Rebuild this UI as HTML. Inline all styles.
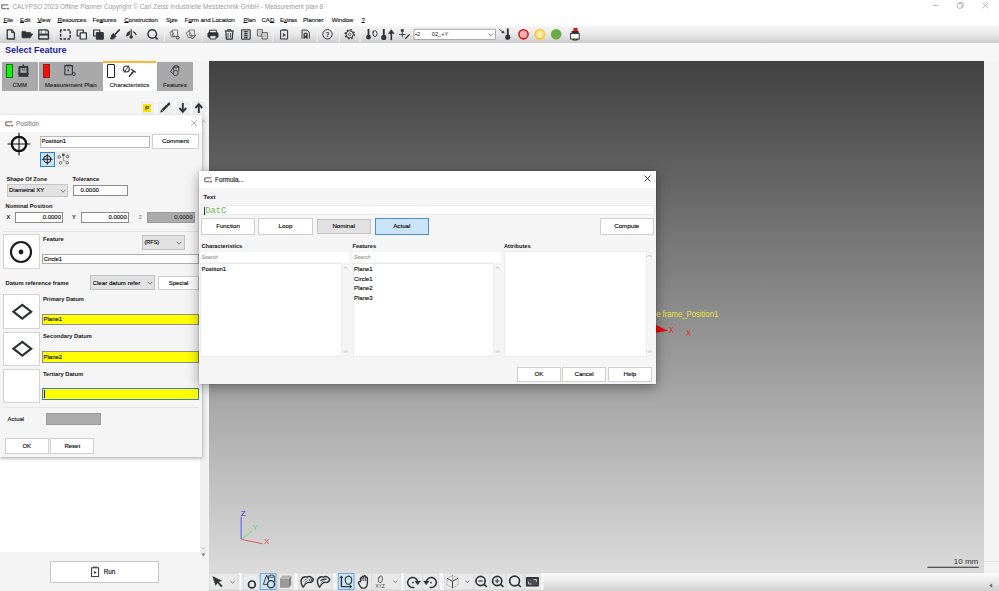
<!DOCTYPE html>
<html><head><meta charset="utf-8"><title>CALYPSO</title>
<style>
*{box-sizing:border-box;margin:0;padding:0}
html,body{width:999px;height:591px;overflow:hidden;background:#fff}
body{font-family:"Liberation Sans",sans-serif;font-size:6.5px;color:#000;position:relative}
.abs{position:absolute}
.t{position:absolute;white-space:nowrap;line-height:1;-webkit-text-stroke:0.12px currentColor}
.btn{position:absolute;background:#fff;border:1px solid #d0d0d0;text-align:center;white-space:nowrap}
.inp{position:absolute;background:#fff;border:1px solid #9a9a9a;white-space:nowrap}
.b{font-weight:bold;-webkit-text-stroke:0 !important}
.mi{top:16.7px;font-size:6.2px;letter-spacing:-0.1px;color:#111;text-align:center}
.mi u{text-decoration-thickness:0.45px;text-underline-offset:0.4px}
</style></head><body>
<!-- title bar -->
<div id="titlebar" class="abs" style="left:0;top:0;width:999px;height:13px;background:#fff"></div>
<div class="t" style="left:12.4px;top:4.2px;font-size:6.42px;color:#9c9c9c;-webkit-text-stroke:0">CALYPSO 2023 Offline Planner Copyright © Carl Zeiss Industrielle Messtechnik GmbH - Measurement plan 8</div>
<!-- menubar -->
<div id="menubar" class="abs" style="left:0;top:13px;width:999px;height:13px;background:#fff"></div>
<svg class="abs" style="left:1.4px;top:3.6px" width="9" height="6" viewBox="0 0 9 6"><path d="M7.4 0.8H2Q0.7 0.8 0.7 2V3.4Q0.7 4.6 2 4.6H5.4" fill="none" stroke="#7c7c7c" stroke-width="1.3"/><rect x="6.2" y="3.8" width="1.6" height="1.6" fill="#e02020"/></svg>
<svg class="abs" style="left:925px;top:0" width="74" height="13" viewBox="0 0 74 13"><g fill="none" stroke="#9a9a9a" stroke-width="0.7"><path d="M8 5.4H13.2"/><rect x="32.4" y="3.6" width="4.6" height="4.6" rx="0.9"/><path d="M33.6 3.6V3.2Q33.6 2.6 34.2 2.6H37.4Q38.2 2.6 38.2 3.4V6.4Q38.2 7.2 37.4 7.2H37"/><path d="M57.4 2.6L63.2 8.4M63.2 2.6L57.4 8.4"/></g></svg>
<div class="t mi" style="left:3.5px;width:9.0px"><u>F</u>ile</div>
<div class="t mi" style="left:20px;width:10.5px"><u>E</u>dit</div>
<div class="t mi" style="left:37px;width:13.75px"><u>V</u>iew</div>
<div class="t mi" style="left:57.5px;width:28.25px"><u>R</u>esources</div>
<div class="t mi" style="left:92.5px;width:23.5px">Fe<u>a</u>tures</div>
<div class="t mi" style="left:123px;width:36px"><u>C</u>onstruction</div>
<div class="t mi" style="left:166px;width:11px">S<u>i</u>ze</div>
<div class="t mi" style="left:183.75px;width:52.0px">F<u>o</u>rm and Location</div>
<div class="t mi" style="left:242px;width:15px"><u>P</u>lan</div>
<div class="t mi" style="left:261.5px;width:12.25px">CA<u>D</u></div>
<div class="t mi" style="left:280px;width:16px">E<u>x</u>tras</div>
<div class="t mi" style="left:302.5px;width:21.5px">Planner</div>
<div class="t mi" style="left:330.5px;width:24.0px">Window</div>
<div class="t mi" style="left:361.5px;width:3.0px"><u>?</u></div>
<!-- toolbar -->
<div id="toolbar" class="abs" style="left:0;top:25px;width:999px;height:18px;background:linear-gradient(#fff 0,#f3f3f3 10%,#ebebeb 45%,#cdcdcd 100%)"></div>
<svg id="tbicons" class="abs" style="left:0;top:24px" width="999" height="22" viewBox="0 24 999 22">
<g fill="none" stroke="#2f3338" stroke-width="1.3" stroke-linejoin="round">
<!-- new -->
<path d="M7.2 29.8H11.6L14.4 32.6V39H7.2Z"/><path d="M11.6 29.8V32.6H14.4" stroke-width="0.9"/>
<!-- open folder -->
<path d="M22 37.6V31.4H25.6L26.6 32.6H30.6V33.6" fill="#2f3338" stroke-width="0.8"/><path d="M22.3 37.8L24.6 33.9H32.6L30.2 37.8Z" fill="#2f3338" stroke-width="0.8"/>
<!-- save -->
<path d="M38.8 29.9H47L48.4 31.3V39H38.8Z" stroke-width="1.4"/><path d="M39 34.6H48.2" stroke-width="2"/><path d="M41.2 30V33.6M45.8 30V33.6" stroke-width="0.6"/>
<!-- dashed rect -->
<rect x="60.6" y="30" width="9.6" height="9" stroke-width="1.5" stroke-dasharray="2.6 1.4" stroke-dashoffset="1.3"/>
<!-- copy -->
<rect x="77.2" y="30" width="6.2" height="6" stroke-width="1.2"/><rect x="80.2" y="32.8" width="6.2" height="6.2" fill="#f0f0f0" stroke-width="1.2"/>
<!-- paste -->
<rect x="93.6" y="30" width="6.2" height="6" stroke-width="1.2"/><rect x="96.3" y="32.6" width="7" height="6.6" fill="#2f3338" stroke-width="1"/>
<!-- brush -->
<path d="M119.2 30L115.4 34" stroke-width="1.8" stroke-linecap="round"/><path d="M113.2 33.2L116.3 36.3L113.4 38.9Q111 39.6 110 38.4Q111.4 38 111.2 35.6Z" fill="#2f3338" stroke-width="0.5"/>
<!-- probe -->
<path d="M131.2 29.2V36" stroke-width="1.3"/><circle cx="131.2" cy="37" r="1.7" fill="#2f3338" stroke="none"/><path d="M129.6 31.4Q127 32.6 126.6 35.8L129 34.8ZM132.8 31.4Q135.4 32.4 136.2 35" stroke-width="1.1" fill="#2f3338"/>
<!-- search -->
<circle cx="152.2" cy="34" r="4.3" stroke-width="1.5"/><path d="M155.3 37.1L157.6 39.4" stroke-width="1.6"/>
</g>
<!-- feature icons -->
<g fill="none" stroke="#555" stroke-width="0.7">
<path d="M172 30H177.6V36.4H172.6Z"/><path d="M170 32.2L172.4 31.2L174.6 36.6L171.4 37.2Z"/><circle cx="177.6" cy="37.6" r="1.4" stroke="#2f3338" stroke-width="1"/>
<path d="M189 30H194.4V35.6H189.6Z"/><path d="M186.2 32.6L189.4 31L192.4 36.6L188.4 37.8Z"/><path d="M190.6 37L192.4 38.8L196.2 34.6" stroke="#2f3338" stroke-width="0.9"/>
</g>
<g fill="none" stroke="#2f3338" stroke-width="1.2" stroke-linejoin="round">
<!-- printer -->
<path d="M209.6 33V30.2H216.4V33" stroke-width="1"/><rect x="207.8" y="32.6" width="10.4" height="4.8" rx="1.2" fill="#2f3338" stroke-width="0.6"/><rect x="210" y="35.6" width="6" height="3.4" fill="#e8e8e8" stroke-width="0.9"/>
<!-- trash -->
<path d="M224.8 31H233.8" stroke-width="1.3"/><path d="M227.6 30.8V29.6H231V30.8" stroke-width="0.9"/><path d="M225.8 31.6L226.4 39.2H232.2L232.8 31.6" stroke-width="1.2"/><path d="M228 32.8V37.8M230.6 32.8V37.8" stroke-width="0.9"/>
<!-- list -->
<rect x="241.6" y="29.8" width="8.6" height="9.4" fill="#c9c9c9" stroke-width="1"/><path d="M244.2 31.6H247.6M244.2 33.6H247.6M244.2 35.6H247.6M244.2 37.6H247.6" stroke-width="1.2"/>
<!-- doc pair -->
<rect x="257.4" y="29.6" width="5" height="6.4" stroke="#444" stroke-width="0.8" fill="#e4e4e4"/><rect x="262" y="32.6" width="5.4" height="6.4" stroke="#444" stroke-width="0.8" fill="#d8d8d8"/><path d="M259.9 31V34.4M263.6 36.8L265.8 34.6" stroke="#666" stroke-width="0.6"/>
<!-- play doc -->
<rect x="280.6" y="30.2" width="7" height="8.8" stroke-width="1"/><path d="M282 29.6H286.2" stroke-width="0.7"/><path d="M283.2 33.4V36.6L285.6 35Z" fill="#2f3338" stroke-width="0.4"/>
<!-- bookmark doc -->
<path d="M302 38.6V30H307L309.4 32.4V38.6" stroke-width="0.9" fill="#d6d6d6"/><path d="M303.8 39V33.6Q305.6 32.2 307.4 33.6V39L305.6 37.2Z" fill="#2f3338" stroke-width="0.4"/><circle cx="305.6" cy="34.8" r="0.9" fill="#e8e8e8" stroke="none"/>
<!-- help -->
<circle cx="327.5" cy="34.3" r="4.7" stroke-width="1"/>
<!-- gear -->
<circle cx="349.7" cy="34.3" r="3.6" stroke-width="1"/><circle cx="349.7" cy="34.3" r="4.6" stroke-width="1.3" stroke-dasharray="1.8 1.81"/><circle cx="349.7" cy="34.3" r="1.3" stroke-width="0.7"/>
<!-- thermo clip -->
<path d="M368.5 29V36" stroke-width="1.8"/><circle cx="368.5" cy="37.2" r="2.4" fill="#2f3338" stroke="none"/><ellipse cx="375" cy="33.6" rx="2" ry="3" stroke-width="0.9"/><path d="M373 33.6Q372 31.6 373.6 30.6" stroke-width="0.7"/>
<!-- thermo arrow -->
<path d="M383.8 29V36" stroke-width="1.9"/><circle cx="383.8" cy="37.4" r="2.6" fill="#2f3338" stroke="none"/><path d="M391.3 40.2V32.5" stroke-width="1.6"/><path d="M388.4 33.6L391.3 29.6L394.2 33.6Z" fill="#2f3338" stroke-width="0.5"/>
<!-- probe pencil -->
<rect x="401" y="29.4" width="2.6" height="2.2" fill="#2f3338" stroke-width="0.4"/><path d="M402.3 31.6V37.4M399 34.4H405.6" stroke-width="0.9"/><path d="M405.2 38.8L409.6 34.4" stroke-width="1.3"/>
<!-- arrow thermo -->
<path d="M507.8 28.4V36" stroke-width="1.9"/><circle cx="507.8" cy="37.2" r="2.6" fill="#2f3338" stroke="none"/><path d="M499.4 29.4L503.4 32.4" stroke-width="1"/><path d="M504.4 33.2L501.6 32.8L503.4 30.8Z" fill="#2f3338" stroke-width="0.4"/>
</g>
<text x="327.5" y="36.7" font-family="Liberation Sans, sans-serif" font-size="6.6" font-weight="bold" fill="#2f3338" text-anchor="middle">?</text>
<!-- separators -->
<g stroke="#fafafa" stroke-width="0.7"><path d="M54.5 27V42M164.4 27V42M202 27V42M273 27V42M317 27V42M339.4 27V42M360 27V42"/></g><g stroke="#e2e2e2" stroke-width="0.5"><path d="M53.9 27V42M163.8 27V42M201.4 27V42M272.4 27V42M316.4 27V42M338.8 27V42M359.4 27V42"/></g>
<!-- combo -->
<rect x="414" y="29.2" width="81.5" height="10.4" fill="#fff" stroke="#8a8a8a" stroke-width="0.7"/>
<text x="415" y="36.3" font-family="Liberation Sans, sans-serif" font-size="5.6" fill="#222">•2</text>
<text x="431.8" y="36.3" font-family="Liberation Sans, sans-serif" font-size="5.6" fill="#222">02_+Y</text>
<path d="M488.6 33.6L490.8 35.8L493 33.6" fill="none" stroke="#444" stroke-width="0.7"/>
<!-- lights -->
<circle cx="523.5" cy="34.3" r="4.6" fill="#ffaeae" stroke="#cc1c1c" stroke-width="1.6"/>
<circle cx="539.8" cy="34.3" r="4.6" fill="#ffe9a6" stroke="#f8c51a" stroke-width="1.6"/>
<circle cx="556.2" cy="34.3" r="5.3" fill="#6aac46"/>
<!-- estop -->
<rect x="573.4" y="28" width="4.2" height="3.4" fill="#ee1111"/><rect x="571.6" y="31" width="7" height="2.6" fill="#2f3338"/><rect x="570.6" y="33.4" width="8.6" height="5.6" fill="#fff" stroke="#2f3338" stroke-width="1"/><rect x="572.4" y="39" width="5.4" height="1.4" fill="#2f3338"/><rect x="574.2" y="39.2" width="1.8" height="1.6" fill="#2a9a2a"/>
</svg>
<!-- select feature strip -->
<div class="abs" style="left:0;top:43px;width:999px;height:18px;background:#f7f7f7"></div>
<div class="t b" style="left:5px;top:46.4px;font-size:9px;color:#1c1c9c">Select Feature</div>
<!-- left panel -->
<div id="left" class="abs" style="left:0;top:61px;width:208.6px;height:530px;background:#f3f3f3"></div>

<!-- tabs -->
<div class="abs" style="left:0;top:91px;width:208px;height:25px;background:#f5f5f5"></div>
<div class="abs" style="left:1.75px;top:62.4px;width:36px;height:28.4px;background:#a9a9a9;border-radius:1.2px 1.2px 0 0"></div>
<div class="abs" style="left:38.75px;top:62.4px;width:63.75px;height:28.4px;background:#a9a9a9;border-radius:1.2px 1.2px 0 0"></div>
<div class="abs" style="left:102.75px;top:61px;width:53.25px;height:29.8px;background:#fff"></div><svg class="abs" style="left:102px;top:60px" width="55" height="4" viewBox="102 60 55 4"><rect x="102.8" y="60.9" width="53.2" height="2.1" fill="#f9b742"/></svg>
<div class="abs" style="left:156.9px;top:62.4px;width:35.9px;height:28.4px;background:#a9a9a9;border-radius:1.2px 1.2px 0 0"></div>
<div class="abs" style="left:6px;top:64.25px;width:7px;height:13.5px;background:#10f210;border:0.6px solid #1b6b1b"></div>
<div class="abs" style="left:43px;top:64.25px;width:7.2px;height:13.5px;background:#fb0a0a;border:0.6px solid #8a2020"></div>
<div class="abs" style="left:106.9px;top:64.25px;width:8.1px;height:13.8px;background:#fff;border:1px solid #222;border-radius:1px"></div>
<svg class="abs" style="left:0;top:58px" width="208" height="62" viewBox="0 58 208 62">
<g fill="none" stroke="#30343a" stroke-linejoin="round">
<!-- CMM -->
<path d="M19.4 73.4V67H27.4V73.4" stroke-width="1.9"/><path d="M23.3 66.4V64.4" stroke-width="1.6"/><path d="M22.4 67.6V70.4H24.4V67.6" stroke-width="0.7" stroke="#555"/><path d="M18.5 75.2H28.4" stroke-width="3.2"/><path d="M17.7 73.4H29" stroke-width="1"/>
<!-- Measurement plan -->
<rect x="64.8" y="65.6" width="7.6" height="9.2" stroke-width="1.1"/><path d="M66.2 65H71" stroke-width="0.7"/><path d="M66.6 67.4H70.6" stroke-width="0.6" stroke="#666"/><rect x="67.4" y="69.6" width="1.6" height="1.6" fill="#30343a" stroke="none"/><circle cx="73.8" cy="74" r="1.5" fill="#a9a9a9" stroke-width="0.9"/>
<!-- Characteristics -->
<circle cx="126.4" cy="69" r="3" stroke-width="1.1"/><path d="M128.8 65.4L124 72.6" stroke-width="0.9"/><path d="M129 76.8L133.6 71.2" stroke-width="1.4"/><path d="M131 69.2L135.8 72.4" stroke-width="1.3"/><path d="M131.4 72.4L133.4 74" stroke-width="0.8"/>
<!-- Features -->
<g stroke-width="0.85" stroke="#3a3e44"><path d="M173.6 70.6V66.6Q176.2 65 178.8 66.6V71.4"/><ellipse cx="176.2" cy="66.8" rx="2.6" ry="1"/><path d="M173 67.4L170.6 71.6L172.8 73.6"/><circle cx="175.6" cy="73" r="2.6"/></g>
</g>
</svg>
<div class="t" style="left:1.75px;width:36px;text-align:center;top:81.7px;font-size:6px;color:#222">CMM</div>
<div class="t" style="left:38.75px;width:63.75px;text-align:center;top:81.7px;font-size:6.2px;color:#222">Measurement Plan</div>
<div class="t" style="left:102.75px;width:53.25px;text-align:center;top:81.7px;font-size:6px;color:#222">Characteristics</div>
<div class="t" style="left:156.9px;width:35.9px;text-align:center;top:81.7px;font-size:6px;color:#222">Features</div>
<!-- sub toolbar -->
<div class="abs" style="left:139.5px;top:99.8px;width:15.6px;height:17px;background:#efefef;border:0.8px solid #fcfcfc"></div>
<div class="abs" style="left:157px;top:99.8px;width:15.8px;height:17px;background:#efefef;border:0.8px solid #fcfcfc"></div>
<div class="abs" style="left:175px;top:99.8px;width:15.6px;height:17px;background:#efefef;border:0.8px solid #fcfcfc"></div>
<div class="abs" style="left:191.4px;top:99.8px;width:15.4px;height:17px;background:#efefef;border:0.8px solid #fcfcfc"></div>
<div class="abs" style="left:143px;top:104px;width:8.2px;height:7.8px;background:#f8e400"></div>
<div class="t b" style="left:143px;width:8.2px;text-align:center;top:105px;font-size:6.2px;color:#333">P</div>
<svg class="abs" style="left:156px;top:98px" width="52" height="18" viewBox="156 98 52 18"><g fill="none" stroke="#2d3238">
<path d="M162.4 110.4L167.2 105.6" stroke-width="2.5"/><path d="M168 104.8L169 103.8" stroke-width="2.5" stroke-linecap="round"/><path d="M160.6 112.2L161.2 110L162.8 111.6Z" fill="#2d3238" stroke-width="0.5"/>
<path d="M182.8 103V110.6" stroke-width="1.9"/><path d="M179.4 108L182.8 111.8L186.2 108" stroke-width="1.9"/>
<path d="M198.8 113V105.4" stroke-width="1.9"/><path d="M195.4 108L198.8 104.2L202.2 108" stroke-width="1.9"/>
</g></svg>
<!-- white list & scrollbar -->
<div class="abs" style="left:0;top:457px;width:200px;height:95px;background:#fff"></div>
<div class="abs" style="left:200px;top:116px;width:8px;height:436px;background:#f0f0f0"></div>
<svg class="abs" style="left:200px;top:116px" width="9" height="445" viewBox="200 116 9 445"><g fill="none" stroke="#aaa" stroke-width="0.7"><path d="M202 122.6L203.8 120.6L205.6 122.6"/><path d="M201.6 547.2L203.4 549.2L205.2 547.2"/></g><path d="M201.4 553.8H205.4L203.4 556.2Z" fill="#777"/><path d="M201.4 553.4H205.4" stroke="#999" stroke-width="0.5"/></svg>
<!-- Run button -->

<div class="btn" style="left:49.5px;top:561px;width:109px;height:21.5px;border-color:#c8c8c8"></div>
<svg class="abs" style="left:90px;top:565px" width="11" height="13" viewBox="90 565 11 13"><rect x="91.6" y="567.8" width="7" height="8.8" fill="none" stroke="#2d3238" stroke-width="1"/><path d="M93 567H97.2" stroke="#2d3238" stroke-width="0.8"/><path d="M94.2 570.8V574L96.6 572.4Z" fill="#2d3238"/></svg>
<div class="t" style="left:103.8px;top:569px;font-size:6.3px">Run</div>
<!-- viewport -->
<div id="view" class="abs" style="left:208.6px;top:61px;width:775.4px;height:511.8px;background:linear-gradient(#414141,#dbdbdb)"></div>
<div class="abs" style="left:984px;top:61px;width:15px;height:530px;background:#f3f3f3"></div>
<div class="abs" style="left:984px;top:561px;width:15px;height:0.6px;background:#e2e2e2"></div>
<div id="btoolbar" class="abs" style="left:541px;top:572.6px;width:458px;height:18.4px;background:linear-gradient(#fcfcfc,#ededed 40%,#d0d0d0)"></div>
<div class="abs" style="left:208.6px;top:572.6px;width:333px;height:18.4px;background:linear-gradient(#dedede,#e2e2e2 80%,#d4d4d4)"></div>
<div class="abs" style="left:238px;top:573px;width:5.4px;height:17px;background:linear-gradient(90deg,#e2e2e2,#fafafa 50%,#e2e2e2)"></div>
<div class="abs" style="left:293px;top:573px;width:6.2px;height:17px;background:linear-gradient(90deg,#e2e2e2,#fafafa 50%,#e2e2e2)"></div>
<div class="abs" style="left:332px;top:573px;width:6px;height:17px;background:linear-gradient(90deg,#e2e2e2,#fafafa 50%,#e2e2e2)"></div>
<div class="abs" style="left:400.2px;top:573px;width:5.2px;height:17px;background:linear-gradient(90deg,#e2e2e2,#fafafa 50%,#e2e2e2)"></div>
<div class="abs" style="left:438.4px;top:573px;width:6.2px;height:17px;background:linear-gradient(90deg,#e2e2e2,#fafafa 50%,#e2e2e2)"></div>
<div class="abs" style="left:540.4px;top:573px;width:4px;height:17px;background:linear-gradient(90deg,#e8e8e8,#fdfdfd 60%,rgba(255,255,255,0))"></div>
<svg class="abs" style="left:208px;top:300px" width="776" height="291" viewBox="208 300 776 291">
<text x="656.2" y="317.2" font-family="Liberation Sans, sans-serif" font-size="8.8" fill="#e8e434" textLength="62" lengthAdjust="spacingAndGlyphs">e frame_Position1</text>
<path d="M655 324.4L668 330.8L655 333Z" fill="#ee0a0a"/>
<text x="668.8" y="332.6" font-family="Liberation Sans, sans-serif" font-size="8.6" fill="#ea2626" textLength="5" lengthAdjust="spacingAndGlyphs">X</text>
<text x="686" y="335.6" font-family="Liberation Sans, sans-serif" font-size="8.6" fill="#ea2626" textLength="5" lengthAdjust="spacingAndGlyphs">X</text>
<!-- triad -->
<path d="M241.2 539.4V517" stroke="#8484da" stroke-width="1.6"/>
<path d="M241.2 539.4L252 531.2" stroke="#5fe35f" stroke-width="0.9"/>
<path d="M241.2 539.4L262.6 543.8" stroke="#e24444" stroke-width="0.8"/>
<text x="240.8" y="515.8" font-family="Liberation Sans, sans-serif" font-size="8" fill="#3434d4">Z</text>
<text x="252.6" y="529.8" font-family="Liberation Sans, sans-serif" font-size="8" fill="#52dc52">Y</text>
<text x="264" y="544.2" font-family="Liberation Sans, sans-serif" font-size="8" fill="#e04a4a">X</text>
<!-- scale -->
<path d="M927.5 567.25H978.8" stroke="#2a2a2a" stroke-width="1"/>
<text x="978.2" y="564.3" font-family="Liberation Sans, sans-serif" font-size="8" fill="#333" text-anchor="end" textLength="24.4" lengthAdjust="spacingAndGlyphs">10 mm</text>
<path d="M989.4 585.6L992.2 583.4V587.8Z" fill="#666"/>
</svg>
<svg class="abs" style="left:984px;top:580px" width="15" height="11" viewBox="984 580 15 11"><path d="M989.4 585.6L992.2 583.4V587.8Z" fill="#666"/></svg>
<!-- bottom toolbar buttons -->
<svg id="bticons" class="abs" style="left:208px;top:572px" width="340" height="19" viewBox="208 572 340 19">
<g fill="#e9e9e9" stroke="#d8d8d8" stroke-width="0.4">
<rect x="209.8" y="573.6" width="28" height="16"/>
<rect x="243.5" y="573.6" width="15.6" height="16"/><rect x="278.6" y="573.6" width="14" height="16"/>
<rect x="299.4" y="573.6" width="15.8" height="16"/><rect x="315.8" y="573.6" width="16" height="16"/>
<rect x="355" y="573.6" width="16.4" height="16"/><rect x="372" y="573.6" width="28" height="16"/>
<rect x="405.6" y="573.6" width="16.4" height="16"/><rect x="422.6" y="573.6" width="15.6" height="16"/>
<rect x="444.8" y="573.6" width="28.8" height="16"/><rect x="474.2" y="573.6" width="15" height="16"/><rect x="490" y="573.6" width="15.8" height="16"/><rect x="506.8" y="573.6" width="15.8" height="16"/><rect x="525" y="573.6" width="15.2" height="16"/>
</g>
<rect x="260.2" y="573.5" width="15.8" height="16" fill="#cce4f7" stroke="#4a90d9" stroke-width="0.7"/>
<rect x="338.2" y="573.5" width="15.8" height="16" fill="#cce4f7" stroke="#4a90d9" stroke-width="0.7"/>
<g fill="none" stroke="#2d3238" stroke-linejoin="round">
<!-- cursor -->
<path d="M212.8 576.6L221.6 580.8L218.4 581.8L222.4 586L221.2 587L217.4 582.8L215.6 585.4Z" fill="#2d3238" stroke-width="0.5"/>
<path d="M230.4 581L232.6 583.2L234.8 581" stroke="#555" stroke-width="0.7"/>
<!-- circle -->
<circle cx="251.9" cy="584.4" r="3.4" stroke-width="1.7"/><path d="M248.4 580.6L249.6 576.4H254.2L255.6 580" stroke="#f8f8f8" stroke-width="0.9"/>
<!-- features selected -->
<path d="M263.4 584.4L266.6 575L269 581.2M263.4 584.4H267.6" stroke-width="0.9"/><path d="M268.6 579V576.2M274.6 576.2V582" stroke-width="0.9"/><ellipse cx="271.6" cy="576.2" rx="3" ry="1.1" stroke-width="0.9"/><circle cx="271" cy="584.2" r="3.5" stroke-width="1.3" fill="#cce4f7"/>
<!-- cube -->
<path d="M280 578.4L289 578.4L289 587.8H280Z" fill="#9a9a9a" stroke="none"/><path d="M280 578.4L282.4 575.6H291.2L289 578.4Z" fill="#b4b4b4" stroke="none"/><path d="M289 578.4L291.2 575.6V585L289 587.8Z" fill="#808080" stroke="none"/>
<!-- surfaces -->
<path d="M303.2 587.2Q300.4 583 301.2 579.8Q303.4 575.6 307 577.2Q310 575 313.4 579.2Q312.8 582.8 309.6 582.4Q306 582 303.2 587.2Z" stroke-width="1.4"/><path d="M303.4 581.6Q305 578.6 307.4 578.8M304.6 583.4Q305.8 580.6 308 580.4" stroke-width="0.6"/><circle cx="310.4" cy="580" r="1.2" stroke-width="0.8" fill="#e9e9e9"/>
<path d="M319.6 587.2Q316.8 583 317.6 579.8Q319.8 575.6 323.4 577.2Q326.4 575 329.8 579.2Q329.2 582.8 326 582.4Q322.4 582 319.6 587.2Z" stroke-width="1.4"/><path d="M320.4 581Q322.6 578.4 326.6 579.4" stroke-width="1.1"/><path d="M320.8 583.4Q322.2 580.8 324.6 580.8" stroke-width="0.6"/>
<!-- axis+hand selected -->
<path d="M341.4 576.6V586.6H351.2" stroke-width="1.4"/><path d="M339.9 578.2L341.4 576L342.9 578.2M349.6 585L351.8 586.6L349.6 588.2" stroke-width="1"/><path d="M345.2 579.6Q345.6 576.6 347.4 576.8Q348.6 575.2 349.8 576.6Q351.6 577.2 351.8 580Q351.8 583 349.6 584.2H347.2Q344.8 582.4 345.2 579.6Z" stroke-width="1.1"/>
<!-- hand -->
<path d="M360.4 581.8V578.2Q361.2 577 362 578.2V576.8Q362.8 575.6 363.8 576.8V576.2Q364.8 575.2 365.6 576.4V577.4Q366.6 576.6 367.4 577.8V583.6Q367.2 587 364.8 588.2H361.8Q359.4 586 358.4 582.8Q358.6 581.2 360.4 581.8Z" stroke-width="1.3"/><path d="M362 578.2V581.2M363.8 576.8V581M365.6 577.4V581.2" stroke-width="0.8"/>
<!-- xyz hand -->
<path d="M378.4 580V577.6Q379 576.6 379.6 577.4V576.4Q380.2 575.6 381 576.4Q381.6 575.6 382.2 576.6V580.4Q382 582 381 582.6H379.4Q377.8 581.4 378.4 580Z" stroke="#444" stroke-width="0.9"/>
<path d="M393.2 580.6L395.2 582.6L397.2 580.6" stroke="#555" stroke-width="0.7"/>
<!-- rotate cw -->
<path d="M414.3 587.2A5 5 0 1 1 417.6 581.8" stroke-width="1.5"/><path d="M414.8 581L420.6 581L417.7 585Z" fill="#2d3238" stroke-width="0.3"/><circle cx="413" cy="582.6" r="0.9" fill="#2d3238" stroke="none"/>
<path d="M429.7 587.2A5 5 0 1 0 426.4 581.8" stroke-width="1.5"/><path d="M429.2 581L423.4 581L426.3 585Z" fill="#2d3238" stroke-width="0.3"/><circle cx="431" cy="582.6" r="0.9" fill="#2d3238" stroke="none"/>
<!-- wire cube -->
<path d="M452.5 575.4L458 578.2V585L452.5 588L447 585V578.2Z" stroke="#666" stroke-width="0.6" stroke-dasharray="1 0.7"/><path d="M452.5 588V581.4L447 578.2M452.5 581.4L458 578.2" stroke-width="0.9"/><path d="M452.5 575.4V581" stroke="#777" stroke-width="0.5"/>
<path d="M465.4 580.6L467.4 582.6L469.4 580.6" stroke="#555" stroke-width="0.7"/>
<!-- zoom -->
<circle cx="480.6" cy="581" r="4.6" stroke-width="1.7"/><path d="M483.8 584.2L486.8 587" stroke-width="1.7"/><path d="M478.4 581H482.8" stroke-width="1.2"/>
<circle cx="497.2" cy="581" r="4.6" stroke-width="1.7"/><path d="M500.4 584.2L503.4 587" stroke-width="1.7"/><path d="M495 581H499.4M497.2 578.8V583.2" stroke-width="1.1"/>
<circle cx="514.6" cy="581" r="4.9" stroke-width="1.7"/><path d="M518.2 584.6L520.8 587" stroke-width="1.7"/>
<!-- fit -->
<rect x="526.6" y="577.8" width="11.6" height="8" stroke-width="1.4" fill="#4a4e54"/><path d="M528.6 581.4V584H531.6M533.6 579.6H536.4V582" stroke="#e0e0e0" stroke-width="0.8"/>
</g>
<text x="380" y="588" font-family="Liberation Sans, sans-serif" font-size="5" fill="#444" text-anchor="middle">XYZ</text>
</svg>
<!-- position dialog -->
<div id="pos" class="abs" style="left:0;top:116px;width:202px;height:340.5px;background:#f5f5f5;box-shadow:0 1px 4px rgba(0,0,0,.4)">
 <div class="abs" style="left:0;top:-0.8px;width:202px;height:16.3px;background:#fff"></div>
 <svg class="abs" style="left:4.5px;top:4.5px" width="9" height="6" viewBox="0 0 9 6"><path d="M7.4 0.8H2Q0.7 0.8 0.7 2V3.4Q0.7 4.6 2 4.6H5.4" fill="none" stroke="#7c7c7c" stroke-width="1.3"/><rect x="6.2" y="3.8" width="1.6" height="1.6" fill="#e02020"/></svg>
 <div class="t" style="left:16px;top:4.3px;font-size:6.4px;color:#8a8a8a;margin-top:0.6px">Position</div>
 <svg class="abs" style="left:190.8px;top:4.2px" width="6" height="6" viewBox="0 0 6 6"><path d="M0.3 0.3L5.7 5.7M5.7 0.3L0.3 5.7" stroke="#9a9a9a" stroke-width="0.8"/></svg>
 <!-- crosshair -->
 <svg class="abs" style="left:6.5px;top:15.5px" width="24" height="24" viewBox="0 0 24 24"><circle cx="12" cy="12" r="7.2" fill="none" stroke="#111" stroke-width="2.3"/><path d="M12 0.8V23.4M0.6 12H23.4" stroke="#111" stroke-width="1.1"/></svg>
 <div class="inp" style="left:40px;top:20.4px;width:110.4px;height:11.2px;border-color:#b8b8b8"></div>
 <div class="t" style="left:41.5px;top:22.4px;font-size:6px">Position1</div>
 <div class="btn" style="left:152px;top:18px;width:47px;height:14.6px;border-color:#cfcfcf"></div>
 <div class="t" style="left:152.5px;width:46px;text-align:center;top:22.3px;font-size:6.2px">Comment</div>
 <div class="abs" style="left:40px;top:36px;width:14.5px;height:14.5px;background:#cce4f7;border:1px solid #2a7fd4"></div>
 <svg class="abs" style="left:41px;top:37px" width="12.5" height="12.5" viewBox="0 0 12.5 12.5"><circle cx="6.25" cy="6.25" r="3.6" fill="none" stroke="#111" stroke-width="1"/><path d="M6.25 0.8V11.7M0.8 6.25H11.7" stroke="#111" stroke-width="0.9"/></svg>
 <svg class="abs" style="left:55.5px;top:36px" width="14.5" height="14.5" viewBox="0 0 14.5 14.5"><rect x="0.25" y="0.25" width="14" height="14" fill="#ececec" stroke="#dcdcdc" stroke-width="0.5"/><g fill="none" stroke="#444" stroke-width="0.7"><circle cx="3.2" cy="5" r="1.3"/><circle cx="11.5" cy="4.6" r="1.3"/><circle cx="4.5" cy="10.8" r="1.3"/><circle cx="11.2" cy="10.8" r="1.3"/><path d="M7.3 4.5V8.8H9.6" stroke="#777"/></g><rect x="6" y="1.6" width="2.6" height="2.6" fill="#555"/></svg>
 <div class="t b" style="left:6.5px;top:60.6px;font-size:5.75px;color:#111">Shape Of Zone</div>
 <div class="t b" style="left:72.5px;top:60.6px;font-size:5.75px;color:#111">Tolerance</div>
 <div class="abs" style="left:6.5px;top:68.2px;width:61.8px;height:12.4px;background:#e2e2e2;border:1px solid #c6c6c6"></div>
 <div class="t" style="left:9px;top:71.3px;font-size:6px">Diametral XY</div>
 <svg class="abs" style="left:59.5px;top:72.8px" width="6" height="4" viewBox="0 0 6 4"><path d="M0.5 0.7L3 3.2L5.5 0.7" fill="none" stroke="#555" stroke-width="0.7"/></svg>
 <div class="inp" style="left:73px;top:68.5px;width:54.5px;height:11.5px;border-color:#8c8c8c"></div>
 <div class="t" style="left:80.5px;top:71.3px;font-size:6px">0.0000</div>
 <div class="t b" style="left:5.5px;top:87.6px;font-size:5.75px;color:#111">Nominal Position</div>
 <div class="t b" style="left:6.5px;top:98.8px;font-size:5.5px;color:#222">X</div>
 <div class="inp" style="left:15px;top:96px;width:47.5px;height:10.5px;border-color:#8c8c8c"></div>
 <div class="t" style="left:15px;width:46px;text-align:right;top:98.4px;font-size:6px">0.0000</div>
 <div class="t b" style="left:72px;top:98.8px;font-size:5.5px;color:#222">Y</div>
 <div class="inp" style="left:81px;top:96px;width:48px;height:10.5px;border-color:#8c8c8c"></div>
 <div class="t" style="left:81px;width:45.8px;text-align:right;top:98.4px;font-size:6px">0.0000</div>
 <div class="t" style="left:138.5px;top:98.8px;font-size:5.5px;color:#999">Z</div>
 <div class="abs" style="left:147px;top:96px;width:47.5px;height:10.5px;background:#ababab;border:1px solid #9a9a9a"></div>
 <div class="t" style="left:147px;width:45.5px;text-align:right;top:98.4px;font-size:6px;color:#333">0.0000</div>
 <div class="abs" style="left:3px;top:115.3px;width:196px;height:0.6px;background:#e4e4e4"></div>
 <!-- feature -->
 <div class="abs" style="left:3px;top:118px;width:36.5px;height:34.5px;background:#fff;border:1px solid #d4d4d4"></div>
 <svg class="abs" style="left:9px;top:123.5px" width="24" height="24" viewBox="0 0 24 24"><circle cx="12" cy="12" r="10" fill="none" stroke="#1c1c1c" stroke-width="2.2"/><circle cx="12" cy="12" r="2.4" fill="#1c1c1c"/></svg>
 <div class="t b" style="left:43px;top:121.1px;font-size:5.75px;color:#111">Feature</div>
 <div class="abs" style="left:142px;top:119px;width:42.5px;height:14.5px;background:#e2e2e2;border:1px solid #c2c2c2"></div>
 <div class="t" style="left:144.5px;top:124.4px;font-size:5.5px">(RFS)</div>
 <svg class="abs" style="left:176px;top:124.5px" width="6" height="4" viewBox="0 0 6 4"><path d="M0.5 0.7L3 3.2L5.5 0.7" fill="none" stroke="#555" stroke-width="0.7"/></svg>
 <div class="inp" style="left:42px;top:137.5px;width:156.6px;height:10.8px;border-color:#adadad"></div>
 <div class="t" style="left:43.5px;top:139.8px;font-size:6px">Circle1</div>
 <!-- datum reference frame -->
 <div class="t b" style="left:5.5px;top:164.8px;font-size:5.8px;color:#111">Datum reference frame</div>
 <div class="abs" style="left:90px;top:158.5px;width:65px;height:15.5px;background:#e2e2e2;border:1px solid #c2c2c2"></div>
 <div class="t" style="left:92.5px;top:164.2px;font-size:6.15px;width:50px;overflow:hidden">Clear datum refer</div>
 <svg class="abs" style="left:146.5px;top:164.8px" width="6" height="4" viewBox="0 0 6 4"><path d="M0.5 0.7L3 3.2L5.5 0.7" fill="none" stroke="#555" stroke-width="0.7"/></svg>
 <div class="btn" style="left:158px;top:159.5px;width:41px;height:14px;border-color:#cfcfcf"></div>
 <div class="t" style="left:158px;width:41px;text-align:center;top:163.6px;font-size:6px">Special</div>
 <!-- primary -->
 <div class="abs" style="left:3px;top:178px;width:36.5px;height:34.5px;background:#fff;border:1px solid #d4d4d4"></div>
 <svg class="abs" style="left:10.5px;top:186.5px" width="23" height="17" viewBox="0 0 23 17"><path d="M11.3 1.8L20.2 8.7L11.3 15.6L2.4 8.7Z" fill="none" stroke="#2c3036" stroke-width="2.1"/></svg>
 <div class="t b" style="left:43px;top:181.1px;font-size:5.75px;color:#111">Primary Datum</div>
 <div class="abs" style="left:42px;top:197.5px;width:157px;height:11.5px;background:#ffff00;border:1px solid #8f8f8f"></div>
 <div class="t" style="left:43.5px;top:200.2px;font-size:6px">Plane1</div>
 <!-- secondary -->
 <div class="abs" style="left:3px;top:215.5px;width:36.5px;height:34px;background:#fff;border:1px solid #d4d4d4"></div>
 <svg class="abs" style="left:10.5px;top:224px" width="23" height="17" viewBox="0 0 23 17"><path d="M11.3 1.8L20.2 8.7L11.3 15.6L2.4 8.7Z" fill="none" stroke="#2c3036" stroke-width="2.1"/></svg>
 <div class="t b" style="left:43px;top:218.4px;font-size:5.75px;color:#111">Secondary Datum</div>
 <div class="abs" style="left:42px;top:235px;width:157px;height:11.5px;background:#ffff00;border:1px solid #8f8f8f"></div>
 <div class="t" style="left:43.5px;top:237.7px;font-size:6px">Plane2</div>
 <!-- tertiary -->
 <div class="abs" style="left:3px;top:252.5px;width:36.5px;height:34.5px;background:#fff;border:1px solid #d4d4d4"></div>
 <div class="t b" style="left:43px;top:255.6px;font-size:5.75px;color:#111">Tertiary Datum</div>
 <div class="abs" style="left:42px;top:271.5px;width:157px;height:12px;background:#ffff00;border:1px solid #3a7bd0"></div>
 <div class="abs" style="left:43.5px;top:273.5px;width:0.6px;height:8px;background:#222"></div>
 <div class="abs" style="left:3px;top:291px;width:196px;height:0.6px;background:#e4e4e4"></div>
 <div class="t" style="left:7.5px;top:300px;font-size:6px;color:#111">Actual</div>
 <div class="abs" style="left:45.5px;top:297.3px;width:55.5px;height:11.5px;background:#ababab;border:1px solid #9a9a9a"></div>
 <div class="btn" style="left:5px;top:322.4px;width:43.5px;height:15.2px;border-color:#cfcfcf"></div>
 <div class="t" style="left:5px;width:43.5px;text-align:center;top:327px;font-size:6px">OK</div>
 <div class="btn" style="left:50px;top:322.4px;width:44px;height:15.2px;border-color:#cfcfcf"></div>
 <div class="t" style="left:50.5px;width:43.5px;text-align:center;top:327px;font-size:6px">Reset</div>
</div>
<!-- formula dialog -->
<div id="frm" class="abs" style="left:199px;top:171px;width:456.5px;height:213px;background:#f5f5f5;box-shadow:0 3px 12px rgba(0,0,0,.38),0 0 2px rgba(0,0,0,.25)">
 <div class="abs" style="left:0;top:0;width:456.5px;height:16.6px;background:#fff"></div>
 <svg class="abs" style="left:5.0px;top:5.6px" width="9" height="6" viewBox="0 0 9 6"><path d="M7.4 0.8H2Q0.7 0.8 0.7 2V3.4Q0.7 4.6 2 4.6H5.4" fill="none" stroke="#7c7c7c" stroke-width="1.3"/><rect x="6.2" y="3.8" width="1.6" height="1.6" fill="#e02020"/></svg>
 <div class="t" style="left:16.0px;top:5.7px;font-size:6.4px;color:#111">Formula...</div>
 <svg class="abs" style="left:444.5px;top:4.0px" width="7" height="7" viewBox="0 0 7 7"><path d="M0.6 0.6L6.4 6.4M6.4 0.6L0.6 6.4" stroke="#222" stroke-width="0.9"/></svg>
 <div class="t b" style="left:4.5px;top:22.6px;font-size:6px;color:#111">Text</div>
 <div class="abs" style="left:2.0px;top:34px;width:453.5px;height:10.4px;background:#fff;border:1px solid #ebebeb"></div>
 <div class="abs" style="left:5px;top:35.6px;width:0.7px;height:8px;background:#333"></div>
 <div class="t" style="left:6.2px;top:35.8px;font-size:8.8px;font-family:'Liberation Mono',monospace;color:#74b862">DatC</div>
 <div class="btn" style="left:2.0px;top:47.4px;width:54px;height:16.2px;border-color:#cfcfcf"></div>
 <div class="t" style="left:2.0px;width:54px;text-align:center;top:51.8px;font-size:6.2px">Function</div>
 <div class="btn" style="left:59.0px;top:47.4px;width:55px;height:16.2px;border-color:#cfcfcf"></div>
 <div class="t" style="left:59.0px;width:55px;text-align:center;top:51.8px;font-size:6.2px">Loop</div>
 <div class="btn" style="left:118px;top:47.6px;width:53.5px;height:15.8px;background:#e1e1e1;border-color:#c4c4c4"></div>
 <div class="t" style="left:118px;width:53.5px;text-align:center;top:51.8px;font-size:6.2px">Nominal</div>
 <div class="btn" style="left:175.6px;top:47.4px;width:54.4px;height:16.2px;background:#cce4f7;border-color:#4a90d9"></div>
 <div class="t" style="left:175.6px;width:54.4px;text-align:center;top:51.8px;font-size:6.2px">Actual</div>
 <div class="btn" style="left:400.5px;top:47.4px;width:54.5px;height:16.2px;border-color:#cfcfcf"></div>
 <div class="t" style="left:400.5px;width:54.5px;text-align:center;top:51.8px;font-size:6.2px">Compute</div>
 <div class="t b" style="left:2.5px;top:72.9px;font-size:5.65px;color:#111">Characteristics</div>
 <div class="t b" style="left:153.5px;top:72.9px;font-size:5.65px;color:#111">Features</div>
 <div class="t b" style="left:305.0px;top:72.9px;font-size:5.65px;color:#111">Attributes</div>
 <!-- search boxes -->
 <div class="abs" style="left:1.0px;top:80.5px;width:149px;height:10px;background:#fff"></div>
 <div class="t" style="left:2.5px;top:84px;font-size:5.2px;color:#9a9a9a;font-style:italic">Search</div>
 <div class="abs" style="left:153.5px;top:80.5px;width:148px;height:10px;background:#fff"></div>
 <div class="t" style="left:155.0px;top:84px;font-size:5.2px;color:#9a9a9a;font-style:italic">Search</div>
 <!-- lists -->
 <div class="abs" style="left:1.0px;top:92.0px;width:142px;height:93.5px;background:#fff;border:1px solid #ececec"></div>
 <div class="abs" style="left:153.5px;top:92.0px;width:141px;height:93.5px;background:#fff;border:1px solid #ececec"></div>
 <div class="abs" style="left:305.0px;top:80.0px;width:142.5px;height:105.5px;background:#fff;border:1px solid #ececec"></div>
 <svg class="abs" style="left:143.8px;top:95.0px" width="5" height="3.5" viewBox="0 0 5 3.5"><path d="M0.5 3L2.5 0.8L4.5 3" fill="none" stroke="#b0b0b0" stroke-width="0.7"/></svg><svg class="abs" style="left:143.8px;top:179.0px" width="5" height="3.5" viewBox="0 0 5 3.5"><path d="M0.5 0.5L2.5 2.7L4.5 0.5" fill="none" stroke="#b0b0b0" stroke-width="0.7"/></svg>
 <svg class="abs" style="left:295.5px;top:95.0px" width="5" height="3.5" viewBox="0 0 5 3.5"><path d="M0.5 3L2.5 0.8L4.5 3" fill="none" stroke="#b0b0b0" stroke-width="0.7"/></svg><svg class="abs" style="left:295.5px;top:179.0px" width="5" height="3.5" viewBox="0 0 5 3.5"><path d="M0.5 0.5L2.5 2.7L4.5 0.5" fill="none" stroke="#b0b0b0" stroke-width="0.7"/></svg>
 <svg class="abs" style="left:447.5px;top:83.0px" width="5" height="3.5" viewBox="0 0 5 3.5"><path d="M0.5 3L2.5 0.8L4.5 3" fill="none" stroke="#b0b0b0" stroke-width="0.7"/></svg><svg class="abs" style="left:447.5px;top:179.0px" width="5" height="3.5" viewBox="0 0 5 3.5"><path d="M0.5 0.5L2.5 2.7L4.5 0.5" fill="none" stroke="#b0b0b0" stroke-width="0.7"/></svg>
 <div class="t" style="left:2.5px;top:94.6px;font-size:6px">Position1</div>
 <div class="t" style="left:155.0px;top:94.6px;font-size:6px">Plane1</div>
 <div class="t" style="left:155.0px;top:104.5px;font-size:6px">Circle1</div>
 <div class="t" style="left:155.0px;top:114.4px;font-size:6px">Plane2</div>
 <div class="t" style="left:155.0px;top:124.2px;font-size:6px">Plane3</div>
 <!-- bottom buttons -->
 <div class="btn" style="left:318.2px;top:196px;width:43.6px;height:15px;border-color:#cfcfcf"></div>
 <div class="t" style="left:318.2px;width:43.6px;text-align:center;top:200.4px;font-size:6.2px">OK</div>
 <div class="btn" style="left:363.3px;top:196px;width:43.6px;height:15px;border-color:#cfcfcf"></div>
 <div class="t" style="left:363.3px;width:43.6px;text-align:center;top:200.4px;font-size:6.2px">Cancel</div>
 <div class="btn" style="left:409px;top:196px;width:43.7px;height:15px;border-color:#cfcfcf"></div>
 <div class="t" style="left:409px;width:43.7px;text-align:center;top:200.4px;font-size:6.2px">Help</div>
</div>
</body></html>
